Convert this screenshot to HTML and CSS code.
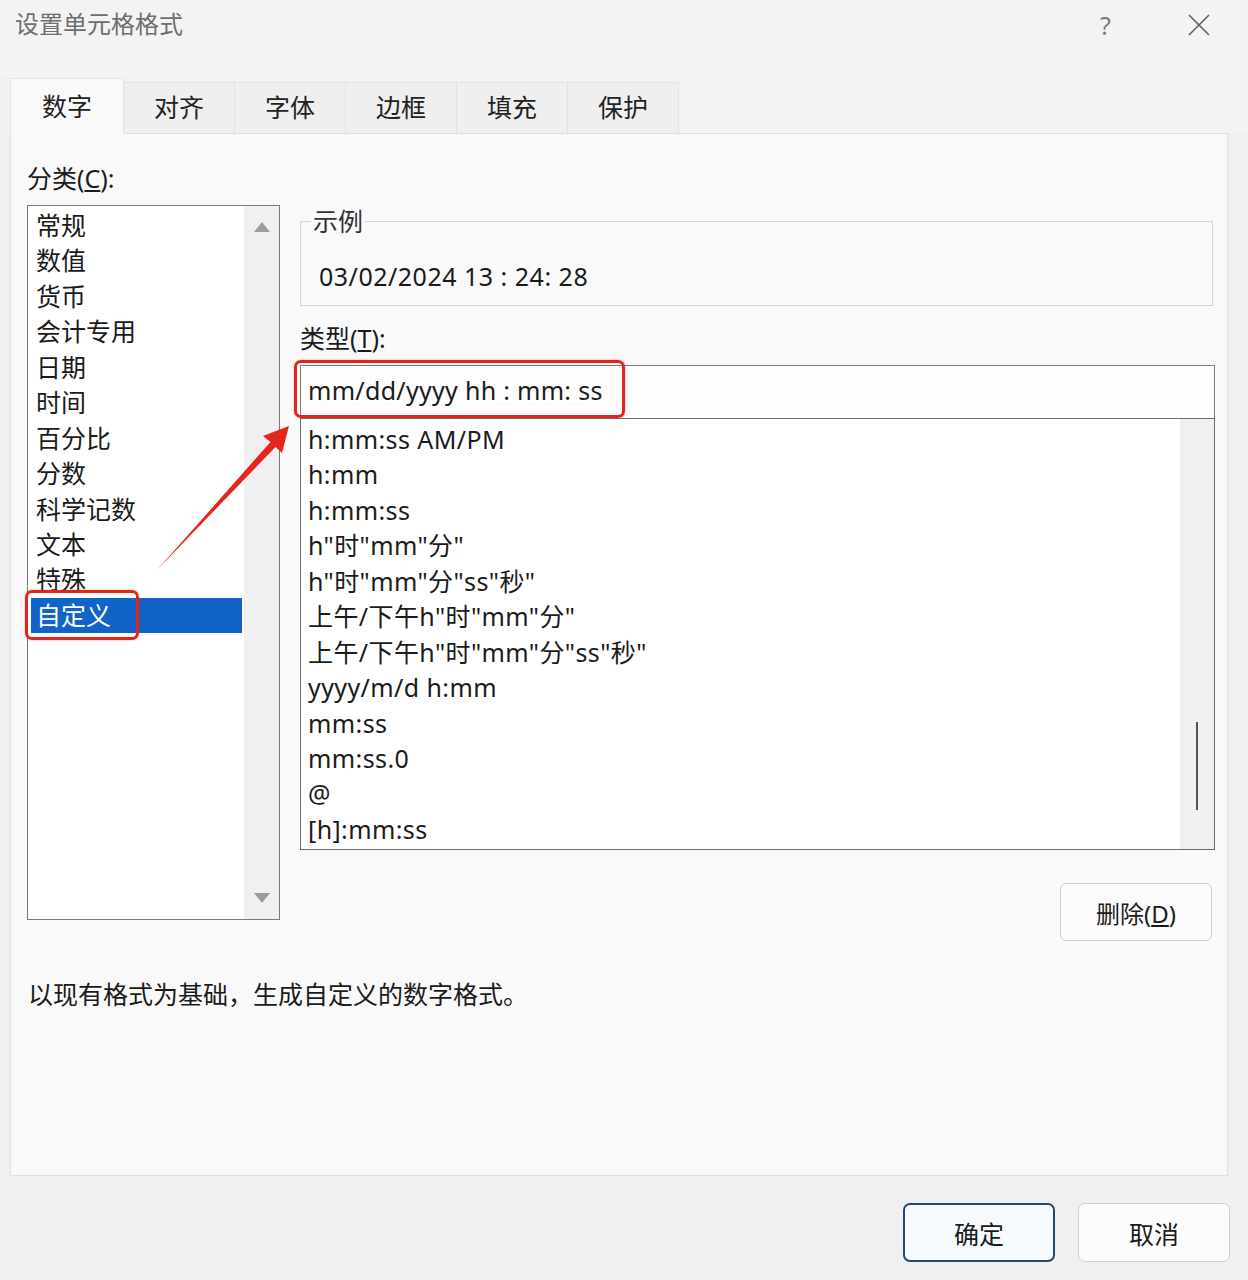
FILE: index.html
```html
<!DOCTYPE html>
<html lang="zh-CN">
<head>
<meta charset="utf-8">
<title>设置单元格格式</title>
<link rel="stylesheet" href="styles.css">
</head>
<body>
<div class="window">
  <header class="titlebar">
    <span class="title">设置单元格格式</span>
    <div class="tb-btns">
      <span class="help">?</span>
      <svg class="close" width="24" height="24" viewBox="0 0 24 24"><path d="M2 2 L22 22 M22 2 L2 22" stroke="#5f5f5f" stroke-width="1.6" fill="none"/></svg>
    </div>
  </header>
  <nav class="tabs">
    <div class="tab active">数字</div>
    <div class="tab">对齐</div>
    <div class="tab">字体</div>
    <div class="tab">边框</div>
    <div class="tab">填充</div>
    <div class="tab">保护</div>
  </nav>
  <section class="panel">
    <div class="cols">
      <div class="left">
        <div class="label cat-label">分类(<u>C</u>):</div>
        <div class="listbox cat">
          <ul class="items">
            <li>常规</li>
            <li>数值</li>
            <li>货币</li>
            <li>会计专用</li>
            <li>日期</li>
            <li>时间</li>
            <li>百分比</li>
            <li>分数</li>
            <li>科学记数</li>
            <li>文本</li>
            <li>特殊</li>
            <li class="selected">自定义</li>
          </ul>
          <div class="vscroll cat-scroll">
            <span class="tri up"></span>
            <span class="tri down"></span>
          </div>
        </div>
      </div>
      <div class="right">
        <fieldset class="sample">
          <legend>示例</legend>
          <div class="sample-val">03/02/2024 13 : 24: 28</div>
        </fieldset>
        <div class="label type-label">类型(<u>T</u>):</div>
        <div class="type-input">mm/dd/yyyy hh : mm: ss</div>
        <div class="listbox fmt">
          <ul class="items">
            <li>h:mm:ss AM/PM</li>
            <li>h:mm</li>
            <li>h:mm:ss</li>
            <li>h"时"mm"分"</li>
            <li>h"时"mm"分"ss"秒"</li>
            <li>上午/下午h"时"mm"分"</li>
            <li>上午/下午h"时"mm"分"ss"秒"</li>
            <li>yyyy/m/d h:mm</li>
            <li>mm:ss</li>
            <li>mm:ss.0</li>
            <li>@</li>
            <li>[h]:mm:ss</li>
          </ul>
          <div class="vscroll fmt-scroll"><span class="thumb"></span></div>
        </div>
        <div class="del-row"><button class="del">删除(<u>D</u>)</button></div>
      </div>
    </div>
    <p class="desc">以现有格式为基础，生成自定义的数字格式。</p>
  </section>
  <footer class="footer">
    <button class="btn primary">确定</button>
    <button class="btn">取消</button>
  </footer>

  <div class="mark mark-input"></div>
  <div class="mark mark-cat"></div>
  <svg class="arrow" width="1248" height="1280" viewBox="0 0 1248 1280">
    <polygon points="157,570 270.5,442 263,436 289,426 282,453 275.5,447" fill="#e6251d"/>
  </svg>
</div>
</body>
</html>
```

FILE: styles.css
```css
* { box-sizing: border-box; }
html, body { margin: 0; padding: 0; }
body {
  width: 1248px;
  height: 1280px;
  overflow: hidden;
  background: #f1f1f2;
  font-family: "Noto Sans", "Noto Sans CJK SC", sans-serif;
  color: #1b1b1b;
}
.window {
  position: relative;
  width: 1248px;
  height: 1280px;
  background: #f0f0f1;
  display: flex;
  flex-direction: column;
}
.titlebar {
  height: 78px;
  display: flex;
  justify-content: space-between;
  align-items: flex-start;
  padding-left: 15px;
  background: #f3f3f4;
}
.title {
  font-size: 24px;
  line-height: 48px;
  color: #6e6e6e;
}
.tb-btns {
  display: flex;
  align-items: center;
  height: 50px;
  padding-right: 37px;
}
.help {
  font-size: 25px;
  color: #7a7a7a;
  width: 14px;
  margin-right: 73px;
}
.close { display: block; }

.tabs {
  display: flex;
  align-items: flex-end;
  height: 55px;
  margin-left: 10px;
  position: relative;
  z-index: 2;
  background: #f3f3f4;
}
.tab {
  height: 51px;
  padding: 0 30px;
  font-size: 25px;
  line-height: 49px;
  background: #efeff0;
  border: 1px solid #e2e2e3;
  border-bottom: none;
  margin-left: -1px;
  color: #222;
}
.tab.active {
  height: 56px;
  margin-bottom: -1px;
  margin-left: 0;
  padding: 0 31px;
  line-height: 54px;
  background: #f9f9fa;
}

.panel {
  margin: 0 20px 0 10px;
  height: 1043px;
  border: 1px solid #e0e0e1;
  background: #f9f9fa;
  padding: 29px 12px 0 16px;
}
.cols {
  display: flex;
  gap: 20px;
}
.left { width: 253px; }
.right { flex: 1; }
.label {
  font-size: 25px;
  line-height: 30px;
}
.cat-label { margin-bottom: 12px; }

.listbox {
  display: flex;
  background: #fff;
  border: 1px solid #7a7a7a;
}
.items {
  list-style: none;
  margin: 0;
  flex: 1;
}
.items li {
  height: 35.45px;
  line-height: 35.45px;
  font-size: 25px;
  white-space: nowrap;
}
.cat { height: 715px; }
.cat .items { padding: 2px 2px 0 3px; }
.cat .items li { padding-left: 5px; }
.cat .items li.selected {
  background: #1063c7;
  color: #fff;
}
.vscroll {
  background: #f0f0f1;
  display: flex;
  flex-direction: column;
  align-items: center;
}
.cat-scroll {
  width: 35px;
  justify-content: space-between;
  padding: 16px 0 16px;
}
.tri {
  width: 0;
  height: 0;
  border-left: 8px solid transparent;
  border-right: 8px solid transparent;
}
.tri.up { border-bottom: 10px solid #9c9c9c; }
.tri.down { border-top: 10px solid #9c9c9c; }

.sample {
  margin: 44px 2px 0 0;
  padding: 0 0 14px 10px;
  border: 1px solid #d5d5d6;
  min-width: 0;
}
.sample legend {
  padding: 0 2px;
  font-size: 25px;
  line-height: 28px;
  color: #333;
}
.sample-val {
  margin: 26px 0 0 8px;
  font-size: 25px;
  line-height: 30px;
  letter-spacing: 0.5px;
}
.type-label { margin-top: 17px; }
.type-input {
  margin-top: 12px;
  height: 53px;
  border: 1px solid #7c7c7c;
  border-bottom: none;
  background: #fdfdfd;
  padding: 0 0 4px 7px;
  font-size: 25px;
  line-height: 48px;
  letter-spacing: 0.3px;
}
.fmt {
  height: 432px;
  border-color: #6c6c6c;
}
.fmt .items { padding: 3px 0 0 7px; }
.fmt .items li { letter-spacing: 0.4px; }
.fmt-scroll { width: 34px; }
.thumb {
  width: 2px;
  height: 88px;
  margin-top: 303px;
  background: #555;
}
.del-row {
  display: flex;
  justify-content: flex-end;
  margin-top: 33px;
  padding-right: 3px;
}
.del {
  width: 152px;
  height: 58px;
  border: 1px solid #cdcdce;
  border-radius: 6px;
  background: #fbfbfc;
  font-family: inherit;
  font-size: 24px;
  color: #1b1b1b;
}
.desc {
  margin: 38px 0 0 1px;
  font-size: 25px;
  line-height: 30px;
}

.footer {
  display: flex;
  justify-content: flex-end;
  gap: 23px;
  padding: 27px 18px 0 0;
}
.btn {
  width: 152px;
  height: 59px;
  border-radius: 7px;
  border: 1px solid #d0d0d1;
  background: #fcfcfc;
  font-family: inherit;
  font-size: 25px;
  color: #1b1b1b;
}
.btn.primary {
  border: 2px solid #24496b;
  background: #f7fafc;
}

.mark {
  position: absolute;
  border: 3px solid #e2241e;
  border-radius: 7px;
  box-shadow: 0 0 2px rgba(226, 36, 30, 0.5);
  z-index: 5;
}
.mark-input { left: 294px; top: 360px; width: 331px; height: 58px; }
.mark-cat { left: 25px; top: 590px; width: 114px; height: 50px; }
.arrow {
  position: absolute;
  left: 0;
  top: 0;
  z-index: 6;
  pointer-events: none;
}
```
